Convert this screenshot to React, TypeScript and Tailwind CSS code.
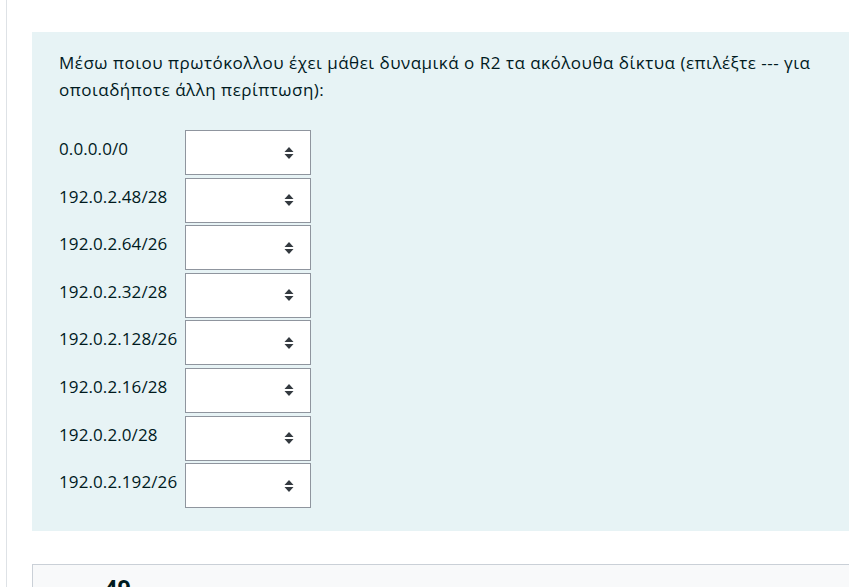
const NETWORKS = [
  "0.0.0.0/0",
  "192.0.2.48/28",
  "192.0.2.64/26",
  "192.0.2.32/28",
  "192.0.2.128/26",
  "192.0.2.16/28",
  "192.0.2.0/28",
  "192.0.2.192/26",
];

function SelectBox() {
  return (
    <div className="w-[126px] h-[45px] bg-white border border-[#8f959e] flex items-center justify-end pr-[16px]">
      <svg width="10" height="14" viewBox="0 0 10 14" className="text-[#343a40]">
        <path d="M5 1 L9.5 6 L0.5 6 Z" fill="currentColor" />
        <path d="M0.5 8 L9.5 8 L5 13 Z" fill="currentColor" />
      </svg>
    </div>
  );
}

export default function App() {
  return (
    <div className="h-[587px] overflow-hidden bg-white font-['Open_Sans',sans-serif] text-[#001a1e]">
      <div className="ml-[6px] h-full border-l border-[#dee2e6] pl-[25px] pt-[32px]">
        {/* ── Formulation panel ─────────────────────── */}
        <div className="bg-[#e7f3f5] pt-[17px] pb-[23px] pl-[27px]">
          <p className="text-[17px] leading-[27px] tracking-[0.5px] w-[790px]">
            Μέσω ποιου πρωτόκολλου έχει μάθει δυναμικά ο R2 τα ακόλουθα δίκτυα (επιλέξτε --- για
            οποιαδήποτε άλλη περίπτωση):
          </p>

          <div className="mt-[27px] flex flex-col gap-[2.6px]">
            {NETWORKS.map((net) => (
              <div key={net} className="flex items-start">
                <div className="w-[126px] pt-[7px] text-[17px] leading-[24px] tracking-[0.1px]">{net}</div>
                <SelectBox />
              </div>
            ))}
          </div>
        </div>

        {/* ── Next question header ──────────────────── */}
        <div className="mt-[33px] h-[60px] bg-[#f8f9fa] border-t border-l border-[#cad0d7] pl-[11px] pt-[6px] flex items-baseline gap-[5px]">
          <span className="text-[13px]">Question</span>
          <span className="text-[23px] font-bold">49</span>
        </div>
      </div>
    </div>
  );
}
